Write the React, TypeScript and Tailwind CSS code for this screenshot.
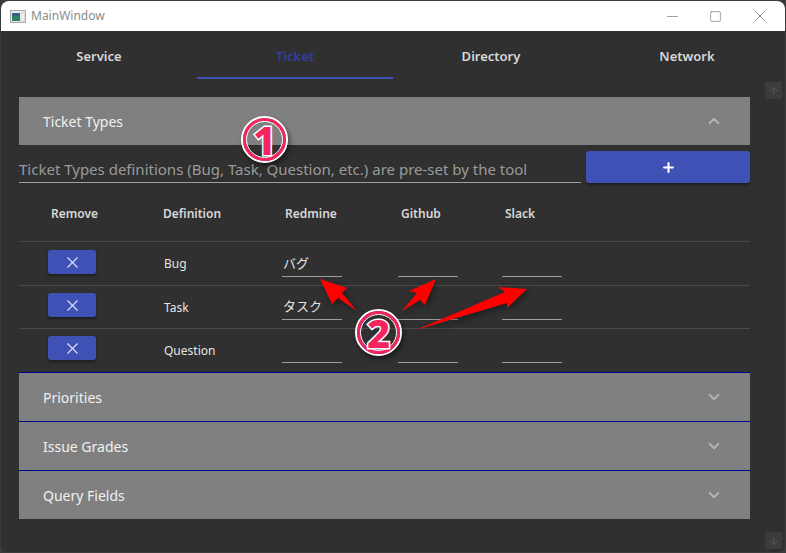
import { ChevronDown, ChevronUp, ArrowDown, ArrowUp, Minus, Square, X, Plus } from "lucide-react";

const tabs = ["Service", "Ticket", "Directory", "Network"];
const rows = [
  { name: "Bug", redmine: "バグ", h: "h-[44px] pt-[8px]", label: "mt-[4px]" },
  { name: "Task", redmine: "タスク", h: "h-[43px] pt-[7px]", label: "mt-[5px]" },
  { name: "Question", redmine: "", h: "h-[43px] pt-[7px]", label: "mt-[5px]" },
];
const cols = "grid grid-cols-[144px_119px_116px_104px_1fr]";

function Field({ value }: { value?: string }) {
  return (
    <div className="mt-[4px] h-[23px] w-[60px] border-b border-[#9e9e9e] pl-[1px] text-[13px] leading-[18px] text-[#e4e4e4]">
      {value}
    </div>
  );
}

function Section({ title, open, line }: { title: string; open?: boolean; line?: boolean }) {
  return (
    <div className={`flex h-[48px] items-center justify-between bg-[#808080] pl-[24px] pr-[27px] ${line ? "box-content border-t border-[#000090]" : ""}`}>
      <span className="text-[14px] text-[#f0f0f0]">{title}</span>
      {open ? (
        <ChevronUp className="h-[18px] w-[18px] text-[#b4b4b4]" strokeWidth={2.4} />
      ) : (
        <ChevronDown className="h-[18px] w-[18px] text-[#b4b4b4]" strokeWidth={2.4} />
      )}
    </div>
  );
}

function Badge({ n, className }: { n: string; className: string }) {
  return (
    <div className={`absolute h-[47px] w-[47px] rounded-full border-[2px] border-white shadow-[2px_3px_5px_rgba(0,0,0,0.45)] ${className}`}>
      <div className="h-full w-full rounded-full border-[3px] border-[#f5245f]">
        <div className="flex h-full w-full items-center justify-center rounded-full border border-white">
          <span className="text-[40px] leading-none font-extrabold text-[#f5245f] [-webkit-text-stroke:3px_white] [paint-order:stroke_fill]">{n}</span>
        </div>
      </div>
    </div>
  );
}

export default function App() {
  return (
    <div className="relative h-[553px] w-[786px] overflow-hidden bg-[#3c3c3c] p-[1px] font-['Noto_Sans','Noto_Sans_CJK_JP',sans-serif]">
      <div className="flex h-[551px] flex-col overflow-hidden rounded-t-[8px] rounded-b-[6px] bg-[#303030]">
        {/* title bar */}
        <div className="flex h-[30px] shrink-0 items-center bg-white pl-[9px] pr-[15px]">
          <svg width="16" height="13" viewBox="0 0 16 13" className="mr-[5px]">
            <rect x="0.5" y="0.5" width="15" height="12" fill="#e8e8e8" stroke="#a8a8a8" />
            <rect x="2" y="3" width="8" height="8" fill="#2f7f6f" />
            <rect x="2" y="3" width="8" height="3" fill="#40607f" />
            <rect x="11" y="3" width="3" height="8" fill="#f4f4f4" stroke="#c4c4c4" strokeWidth="0.5" />
          </svg>
          <span className="text-[12px] text-[#8c8c8c]">MainWindow</span>
          <div className="ml-auto flex items-center gap-[28px] text-[#777]">
            <Minus className="h-[17px] w-[17px]" strokeWidth={1} />
            <Square className="h-[13px] w-[13px]" strokeWidth={1.2} />
            <X className="h-[20px] w-[20px]" strokeWidth={1} />
          </div>
        </div>

        {/* tabs */}
        <div className="grid h-[48px] shrink-0 grid-cols-4">
          {tabs.map((t) => (
            <div
              key={t}
              className={`flex items-start justify-center border-b-2 pt-[16px] text-[13px] leading-[18px] font-semibold ${
                t === "Ticket" ? "border-[#3f51b5] text-[#303f9f]" : "border-transparent text-[#d8d8d8]"
              }`}
            >
              {t}
            </div>
          ))}
        </div>

        <div className="ml-[18px] mt-[18px] w-[731px]">
          <Section title="Ticket Types" open />

          <div className="flex h-[38px] items-end justify-between">
            <div className="h-[33px] w-[562px] border-b border-[#9e9e9e] pt-[6px] text-[15px] leading-[26px] whitespace-nowrap text-[#9a9a9a]">
              Ticket Types definitions (Bug, Task, Question, etc.) are pre-set by the tool
            </div>
            <div className="flex h-[32px] w-[164px] items-center justify-center rounded-[3px] bg-[#3f51b5] shadow-[0_2px_3px_rgba(0,0,0,0.4)]">
              <Plus className="h-[15px] w-[15px] text-white" strokeWidth={3.4} />
            </div>
          </div>

          <div className={`${cols} h-[59px] border-b border-[#4a4a4a] pt-[22px] text-[12px] leading-[18px] font-semibold text-[#d8d8d8]`}>
            <span className="pl-[32px]">Remove</span>
            <span>Definition</span>
            <span className="pl-[3px]">Redmine</span>
            <span className="pl-[3px]">Github</span>
            <span className="pl-[3px]">Slack</span>
          </div>

          {rows.map((r, i) => (
            <div key={r.name} className={`${cols} ${r.h} items-start ${i < 2 ? "border-b border-[#4a4a4a]" : ""}`}>
              <div className="pl-[29px]">
                <div className="flex h-[24px] w-[48px] items-center justify-center rounded-[3px] bg-[#3f51b5] shadow-[0_2px_3px_rgba(0,0,0,0.4)]">
                  <X className="h-[19px] w-[19px] text-[#dfe2f4]" strokeWidth={1.4} />
                </div>
              </div>
              <span className={`${r.label} pl-[1px] text-[12px] leading-[20px] text-[#e4e4e4]`}>{r.name}</span>
              <Field value={r.redmine} />
              <Field />
              <Field />
            </div>
          ))}

          <Section title="Priorities" line />
          <Section title="Issue Grades" line />
          <Section title="Query Fields" line />
        </div>
      </div>

      {/* scroll buttons */}
      <div className="absolute left-[765px] top-[82px] flex h-[17px] w-[17px] items-center justify-center bg-[#3c3c3c]">
        <ArrowUp className="h-[12px] w-[12px] text-[#4e4e4e]" strokeWidth={3} />
      </div>
      <div className="absolute left-[765px] top-[532px] flex h-[17px] w-[17px] items-center justify-center bg-[#3c3c3c]">
        <ArrowDown className="h-[12px] w-[12px] text-[#4e4e4e]" strokeWidth={3} />
      </div>

      {/* annotations */}
      <svg width="786" height="553" className="pointer-events-none absolute left-0 top-0 drop-shadow-[2px_3px_3px_rgba(0,0,0,0.4)]">
        <polygon points="357,311 342,293 347,288 320,279 332,304 338,298" fill="#ff0000" />
        <polygon points="402,311 417,293 409,291 436,279 425,305 420,300" fill="#ff0000" />
        <polygon points="416,330 505,292 498,287 527,289 507,308 507,303" fill="#ff0000" />
      </svg>
      <Badge n="1" className="left-[241px] top-[116px]" />
      <Badge n="2" className="left-[355px] top-[309px]" />
    </div>
  );
}
